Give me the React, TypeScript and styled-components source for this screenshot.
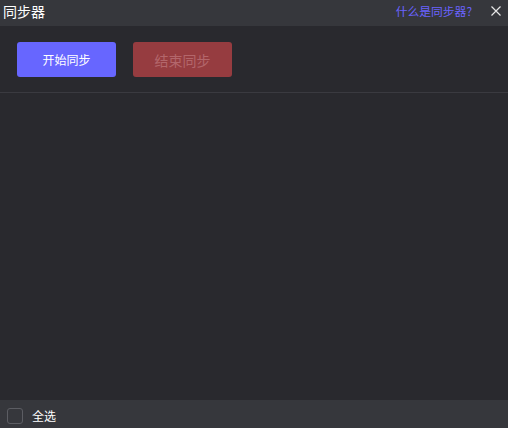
import React from 'react';
import styled, { createGlobalStyle } from 'styled-components';

const GlobalStyle = createGlobalStyle`
  html, body {
    margin: 0;
    padding: 0;
    background: #29292e;
  }
  body {
    font-family: "Noto Sans CJK SC", "Noto Sans", sans-serif;
  }
`;

const Panel = styled.div`
  display: flex;
  flex-direction: column;
  width: 508px;
  height: 428px;
  background-color: #29292e;
  overflow: hidden;
`;

const Header = styled.div`
  display: flex;
  align-items: center;
  justify-content: space-between;
  height: 26px;
  padding: 0 7px 0 3px;
  background-color: #36373c;
  box-sizing: border-box;
`;

const Title = styled.div`
  font-size: 14px;
  color: #ffffff;
  line-height: 22px;
  margin-top: -4px;
`;

const HeaderRight = styled.div`
  display: flex;
  align-items: center;
  gap: 19px;
`;

const HelpLink = styled.a`
  font-size: 11.8px;
  color: #6a63ff;
  text-decoration: none;
  margin-top: -5px;
`;

const CloseButton = styled.button`
  display: flex;
  align-items: center;
  justify-content: center;
  width: 10px;
  height: 10px;
  padding: 0;
  border: none;
  background: transparent;
  margin-top: -4px;
`;

const Toolbar = styled.div`
  display: flex;
  gap: 17px;
  padding: 16px 17px 15px;
  border-bottom: 1px solid #3a3a40;
`;

const ActionButton = styled.button<{ $variant: 'start' | 'stop' }>`
  width: 99px;
  height: 35px;
  border: none;
  border-radius: 3px;
  font-family: "Noto Sans CJK SC", "Noto Sans", sans-serif;
  font-size: ${p => (p.$variant === 'start' ? '12px' : '14px')};
  background-color: ${p => (p.$variant === 'start' ? '#6766ff' : '#963c40')};
  color: ${p => (p.$variant === 'start' ? '#ffffff' : '#b3666b')};
  cursor: ${p => (p.$variant === 'start' ? 'pointer' : 'not-allowed')};
`;

const Content = styled.div`
  flex: 1;
`;

const Footer = styled.div`
  display: flex;
  align-items: center;
  gap: 9px;
  height: 28px;
  padding: 0 7px;
  background-color: #36373c;
  box-sizing: border-box;
`;

const CheckBox = styled.span`
  width: 14px;
  height: 14px;
  border: 1px solid #5c5d63;
  border-radius: 3px;
  margin-top: 3px;
`;

const FooterLabel = styled.span`
  font-size: 12px;
  color: #ffffff;
  margin-top: 2px;
`;

export default function App() {
  return (
    <>
      <GlobalStyle />
      <Panel>
        <Header>
          <Title>同步器</Title>
          <HeaderRight>
            <HelpLink href="#">什么是同步器?</HelpLink>
            <CloseButton aria-label="关闭">
              <svg width="10" height="10" viewBox="0 0 10 10">
                <path d="M0.5 0.5 L9.5 9.5 M9.5 0.5 L0.5 9.5" stroke="#e6e6e6" strokeWidth="1.2" />
              </svg>
            </CloseButton>
          </HeaderRight>
        </Header>
        <Toolbar>
          <ActionButton $variant="start">开始同步</ActionButton>
          <ActionButton $variant="stop">结束同步</ActionButton>
        </Toolbar>
        <Content />
        <Footer>
          <CheckBox />
          <FooterLabel>全选</FooterLabel>
        </Footer>
      </Panel>
    </>
  );
}
